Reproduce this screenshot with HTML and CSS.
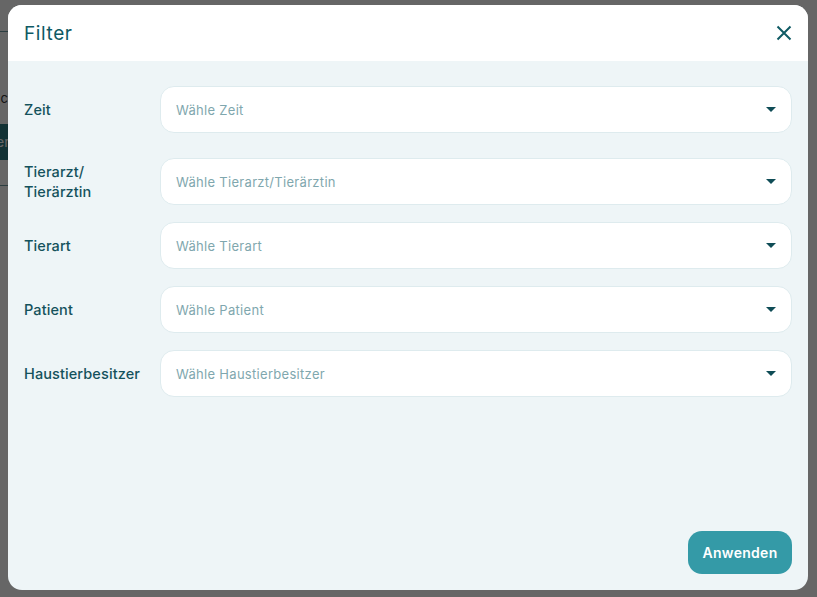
FILE: index.html
```html
<!DOCTYPE html>
<html lang="de">
<head>
<meta charset="utf-8">
<title>Filter</title>
<link rel="stylesheet" href="styles.css">
</head>
<body>
<div class="page-behind">
  <div class="bg-line bg-line-top"></div>
  <div class="bg-text">Suche c</div>
  <div class="bg-button">Anlegen</div>
  <div class="bg-line bg-line-bottom"></div>
</div>
<div class="overlay">
  <div class="modal">
    <div class="modal-header">
      <h2 class="modal-title">Filter</h2>
      <button class="close-btn" aria-label="Schließen">
        <svg width="16" height="16" viewBox="0 0 16 16"><path d="M1.5 1.5L14.5 14.5M14.5 1.5L1.5 14.5" stroke="#0f5a64" stroke-width="2" fill="none"/></svg>
      </button>
    </div>
    <div class="modal-body">
      <div class="form">
        <div class="row">
          <label class="label">Zeit</label>
          <div class="select"><span>Wähle Zeit</span><i class="caret"></i></div>
        </div>
        <div class="row row-second">
          <label class="label">Tierarzt/<br>Tierärztin</label>
          <div class="select"><span>Wähle Tierarzt/Tierärztin</span><i class="caret"></i></div>
        </div>
        <div class="row">
          <label class="label">Tierart</label>
          <div class="select"><span>Wähle Tierart</span><i class="caret"></i></div>
        </div>
        <div class="row">
          <label class="label">Patient</label>
          <div class="select"><span>Wähle Patient</span><i class="caret"></i></div>
        </div>
        <div class="row">
          <label class="label">Haustierbesitzer</label>
          <div class="select"><span>Wähle Haustierbesitzer</span><i class="caret"></i></div>
        </div>
      </div>
      <div class="footer">
        <button class="apply-btn">Anwenden</button>
      </div>
    </div>
  </div>
</div>
</body>
</html>
```

FILE: styles.css
```css
* { box-sizing: border-box; }
html, body { margin: 0; padding: 0; }
body {
  width: 817px;
  height: 597px;
  overflow: hidden;
  font-family: "Inter", "Liberation Sans", sans-serif;
  background: #ffffff;
  position: relative;
}
.page-behind {
  position: absolute;
  inset: 0;
}
.bg-line {
  position: absolute;
  left: -20px;
  width: 40px;
  height: 1px;
  background: #6f9ca2;
}
.bg-line-top { top: 31px; }
.bg-line-bottom { top: 185px; }
.bg-text {
  position: absolute;
  left: -42px;
  top: 90px;
  font-size: 13px;
  color: #333;
}
.bg-button {
  position: absolute;
  left: -50px;
  top: 124px;
  height: 36px;
  width: 80px;
  background: #2f7d86;
  color: #fff;
  font-size: 14px;
  line-height: 36px;
  padding-left: 8px;
}
.overlay {
  position: absolute;
  inset: 0;
  background: rgba(0, 0, 0, 0.6);
  padding: 5px 9px 7px 8px;
}
.modal {
  width: 800px;
  height: 585px;
  border-radius: 14px;
  overflow: hidden;
  background: #eef5f7;
  display: flex;
  flex-direction: column;
}
.modal-header {
  height: 56px;
  background: #ffffff;
  display: flex;
  align-items: center;
  justify-content: space-between;
  padding: 0 16px 0 16px;
}
.modal-title {
  margin: 0;
  font-size: 19px;
  font-weight: 400;
  color: #0f5a64;
  letter-spacing: 0.6px;
}
.close-btn {
  border: none;
  background: transparent;
  padding: 0;
  width: 16px;
  height: 16px;
  display: flex;
  cursor: pointer;
}
.modal-body {
  flex: 1;
  display: flex;
  flex-direction: column;
  justify-content: space-between;
  padding: 25px 16px 16px 16px;
}
.form {
  display: flex;
  flex-direction: column;
  gap: 17px;
}
.row {
  display: flex;
  align-items: center;
}
.row-second { margin-top: 8px; }
.label {
  width: 136px;
  flex-shrink: 0;
  font-size: 14.5px;
  line-height: 20px;
  font-weight: 500;
  color: #14525c;
  letter-spacing: 0.1px;
}
.select {
  flex: 1;
  height: 47px;
  background: #ffffff;
  border: 1px solid #deebee;
  border-radius: 14px;
  display: flex;
  align-items: center;
  justify-content: space-between;
  padding: 0 15px 0 15px;
}
.select span {
  font-size: 13px;
  color: #7fa7ae;
  letter-spacing: 0.3px;
}
.caret {
  width: 0;
  height: 0;
  border-left: 5px solid transparent;
  border-right: 5px solid transparent;
  border-top: 5px solid #0f4c56;
}
.footer {
  display: flex;
  justify-content: flex-end;
}
.apply-btn {
  height: 43px;
  width: 104px;
  border: none;
  border-radius: 14px;
  background: #349aa7;
  color: #ffffff;
  font-family: inherit;
  font-size: 14px;
  font-weight: 600;
  letter-spacing: 0.3px;
  cursor: pointer;
}
```
